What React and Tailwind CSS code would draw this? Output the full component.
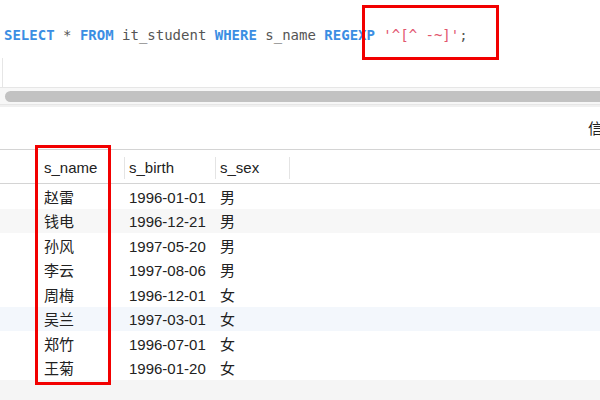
import React from "react";

const rows = [
  { name: "赵雷", birth: "1996-01-01", sex: "男", bg: "bg-white" },
  { name: "钱电", birth: "1996-12-21", sex: "男", bg: "bg-[#f7f7f7]" },
  { name: "孙风", birth: "1997-05-20", sex: "男", bg: "bg-white" },
  { name: "李云", birth: "1997-08-06", sex: "男", bg: "bg-white" },
  { name: "周梅", birth: "1996-12-01", sex: "女", bg: "bg-white" },
  { name: "吴兰", birth: "1997-03-01", sex: "女", bg: "bg-[#f3f7fc]" },
  { name: "郑竹", birth: "1996-07-01", sex: "女", bg: "bg-white" },
  { name: "王菊", birth: "1996-01-20", sex: "女", bg: "bg-white" },
];

const cell = "font-['Liberation_Sans','Noto_Sans_CJK_SC',sans-serif] text-[15px] text-[#222]";

const App = () => {
  return (
    <div className="relative h-[400px] w-[600px] overflow-hidden bg-white">
      {/* editor */}
      <div className="h-[58px] pl-[4px] pt-[25px]">
        <div className="whitespace-pre font-['DejaVu_Sans_Mono',monospace] text-[14px] leading-[20px] text-[#555]">
          <span className="font-bold text-[#3b8ee3]">SELECT</span> * <span className="font-bold text-[#3b8ee3]">FROM</span> it_student{" "}
          <span className="font-bold text-[#3b8ee3]">WHERE</span> s_name <span className="font-bold text-[#3b8ee3]">REGEXP</span>{" "}
          <span className="text-[#e2566e]">'^[^ -~]'</span>;
        </div>
      </div>
      <div className="ml-[2px] h-[29px] border-l border-[#e6e6e6]" />
      {/* scrollbar */}
      <div className="flex h-[18px] items-center border-y border-[#e6e6e6] bg-[#f7f7f7] pl-[5px]">
        <div className="h-[11px] w-full rounded-l-full bg-[#c2c2c2]" />
      </div>
      {/* result toolbar */}
      <div className="flex h-[44px] items-center justify-end border-t-2 border-[#f0f0f0]">
        <span className="mr-[-3px] font-['Noto_Sans_CJK_SC',sans-serif] text-[15px] text-[#222]">信</span>
      </div>
      {/* header */}
      <div className="flex h-[35px] items-center border-y border-[#d4d4d4] bg-white pt-[3px]">
        <div className="w-[44px]" />
        <div className={`w-[80px] ${cell}`}>s_name</div>
        <div className="h-[22px] w-px bg-[#e4e4e4]" />
        <div className={`w-[90px] pl-[4px] ${cell}`}>s_birth</div>
        <div className="h-[22px] w-px bg-[#e4e4e4]" />
        <div className={`w-[73px] pl-[4px] ${cell}`}>s_sex</div>
        <div className="h-[22px] w-px bg-[#e4e4e4]" />
      </div>
      {/* rows */}
      <div>
        {rows.map((r) => (
          <div key={r.name} className={`flex h-[24.5px] items-center pt-[3px] ${r.bg}`}>
            <div className="w-[44px]" />
            <div className={`w-[85px] ${cell}`}>{r.name}</div>
            <div className={`w-[91px] ${cell}`}>{r.birth}</div>
            <div className={cell}>{r.sex}</div>
          </div>
        ))}
      </div>
      <div className="h-[30px] bg-[#f5f5f5]" />

      {/* annotation boxes */}
      <div className="absolute left-[362px] top-[5px] h-[55px] w-[137px] border-[3px] border-[#f20000]" />
      <div className="absolute left-[35px] top-[145px] h-[240px] w-[76px] border-[3px] border-[#f20000]" />
    </div>
  );
};

export default App;
